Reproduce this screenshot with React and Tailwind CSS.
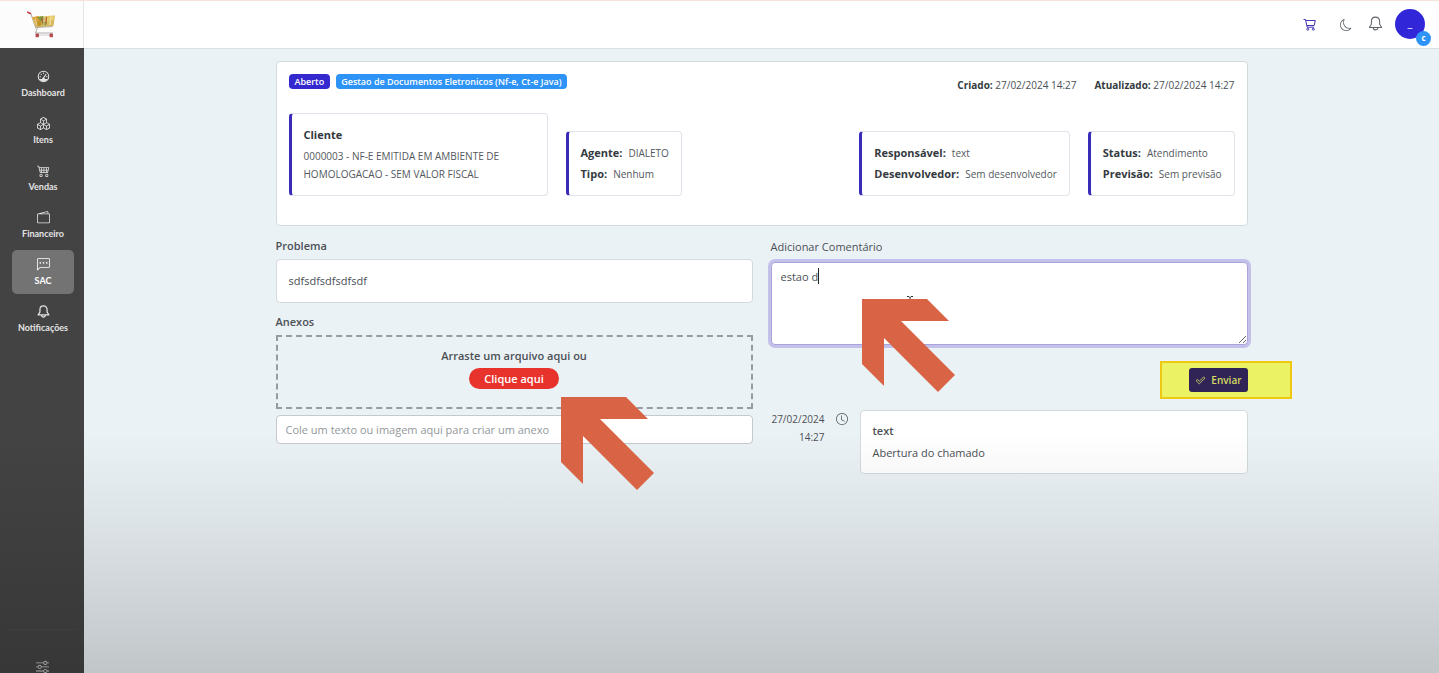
import React from "react";
import { BsBoxes, BsCart4, BsWallet2, BsSliders, BsMoon, BsClock, BsChatLeftDots } from "react-icons/bs";

function GaugeIcon({ className }) {
  return (
    <svg viewBox="0 0 14 14" className={className} fill="none" stroke="currentColor" aria-hidden="true">
      <circle cx="7" cy="7" r="5.700" strokeWidth="1.100" />
      <path d="M2.300 9.600H5.200A2 2 0 0 1 8.800 9.600H11.700A5.500 5.500 0 0 1 2.300 9.600Z" fill="currentColor" stroke="none" />
      <path d="M6.800 8.800L9.600 4.800" strokeWidth="1.200" strokeLinecap="round" />
      <g fill="currentColor" stroke="none">
        <circle cx="3.500" cy="7.200" r="0.700" />
        <circle cx="4.500" cy="4.700" r="0.700" />
        <circle cx="7" cy="3.500" r="0.700" />
        <circle cx="10.600" cy="7.200" r="0.700" />
      </g>
    </svg>
  );
}

function BellIcon({ className, weight = 1.5 }) {
  return (
    <svg viewBox="0 0 16 16" className={className} fill="none" stroke="currentColor" strokeWidth={weight} strokeLinejoin="round" aria-hidden="true">
      <path d="M8 1.200C5 1.200 3.600 3.200 3.600 5.800V8.800L1.400 12.200H14.600L12.400 8.800V5.800C12.400 3.200 11 1.200 8 1.200Z" />
      <path d="M5.600 12.400C5.600 15.600 10.400 15.600 10.400 12.400" />
    </svg>
  );
}

function HeaderCartIcon() {
  return (
    <svg viewBox="0 0 13 13" className="size-[13px]" fill="none" stroke="currentColor" strokeWidth="1" strokeLinejoin="round" aria-hidden="true">
      <path d="M0.500 1.500H2.500L4.200 9.200H11" />
      <path d="M2.700 2.500H12.300L11.200 7.500H3.900" />
      <circle cx="4.800" cy="11.200" r="1" />
      <circle cx="10.300" cy="11.200" r="1" />
    </svg>
  );
}

const navItems = [
  { label: "Dashboard", Icon: GaugeIcon },
  { label: "Itens", Icon: BsBoxes },
  { label: "Vendas", Icon: BsCart4 },
  { label: "Financeiro", Icon: BsWallet2 },
  { label: "SAC", Icon: BsChatLeftDots, active: true },
  { label: "Notificações", Icon: BellIcon },
];

function CartLogo() {
  return (
    <svg viewBox="0 0 30 28" className="h-[28px] w-[30px]" aria-label="Logo" role="img">
      <path d="M1 1.500 L4 3 L9 17.500" fill="none" stroke="#a9a4a0" strokeWidth="1" />
      <path d="M0.800 1.200 L3.500 2.500" stroke="#c8404a" strokeWidth="1.600" strokeLinecap="round" />
      <path d="M4.500 6 L28 4.500 L26.500 15 L9 16.500 Z" fill="#d8b85c" />
      <path d="M5.500 6.500 L11 5 L14 9 L10 12 Z" fill="#dd9c34" />
      <path d="M10 6 L16 5 L18 8 L14 11 Z" fill="#83993a" />
      <path d="M18 5.500 L27 5 L27 9 L20 11 Z" fill="#e8cc6a" />
      <circle cx="12" cy="12.500" r="2.500" fill="#c09428" />
      <circle cx="17.500" cy="12.500" r="2.200" fill="#8f9138" />
      <circle cx="22.500" cy="12" r="2.200" fill="#dcc46c" />
      <path d="M15 7 L15.500 12 M19.500 6 L19 12" stroke="#b5523a" strokeWidth="1" />
      <path d="M8 7 L10 14 M24 5.500 L23 14 M17 5 V15" stroke="#f3ebc8" strokeWidth="0.700" />
      <path d="M9.500 16.500 L25.500 15.500 M10.500 16.500 L8.500 22 H26" fill="none" stroke="#aaa5a5" strokeWidth="0.900" />
      <path d="M9 24 H26" stroke="#c9c4c4" strokeWidth="0.800" />
      <rect x="8.500" y="22.500" width="3.500" height="3.800" rx="1" fill="#b54c4c" />
      <rect x="22.500" y="22.500" width="3.500" height="3.800" rx="1" fill="#b54c4c" />
    </svg>
  );
}

function Arrow({ className }) {
  return (
    <svg viewBox="0 0 93 93" className={"pointer-events-none absolute z-30 h-[93px] w-[93px] " + className} aria-hidden="true">
      <path d="M0 0H65L87 22H39L93 76L76 93L22 39V87L0 65Z" fill="#d96445" />
    </svg>
  );
}

function CheckOutline() {
  return (
    <svg viewBox="0 0 12 10" className="h-[9px] w-[11px]" fill="none" stroke="currentColor" strokeWidth="0.900" strokeLinejoin="round" aria-hidden="true">
      <path d="M1 5.200 L2.500 3.800 L4.600 5.800 L9.600 1 L11 2.400 L4.600 8.700 Z" />
    </svg>
  );
}

function InfoCard({ rows }) {
  return (
    <dl className="flex flex-col gap-[3px] rounded-[4px] border border-l-[3px] border-[#dfe4ea] border-l-[#3a2bb8] p-3">
      {rows.map(([term, value]) => (
        <div key={term} className="flex items-baseline gap-[6px] leading-[18px] whitespace-nowrap">
          <dt className="text-[11px] font-bold text-[#343a40]">{term}</dt>
          <dd className="text-[10px] text-[#53585d]">{value}</dd>
        </div>
      ))}
    </dl>
  );
}

export default function App() {
  return (
    <div className="relative flex min-h-screen bg-[#ebf2f5] font-['Open_Sans','Noto_Sans',sans-serif] text-[#4b5055]">
      <aside className="flex w-[84px] shrink-0 flex-col bg-[#434343]">
        <a href="#" className="flex h-[48px] items-center justify-center border-t border-r border-t-[#f7e3da] border-r-[#e6e6e6] bg-[#fcfcfc]">
          <CartLogo />
        </a>
        <nav className="flex flex-col gap-[3px] pt-[14px] pr-[10px] pl-3">
          {navItems.map(({ label, Icon, active }) => (
            <a
              key={label}
              href="#"
              className={
                "flex h-[44px] flex-col items-center justify-center gap-[3px] rounded-[5px] pt-[2px] font-['Lato','Open_Sans',sans-serif] text-[9px] leading-[14px] font-bold whitespace-nowrap " +
                (active ? "bg-[#737373] text-white" : "text-[#e4e4e4]")
              }
            >
              <Icon className="size-[13px]" />
              {label}
            </a>
          ))}
        </nav>
        <div className="mx-2 mt-auto flex h-[44px] items-end justify-center border-t border-[#4a4a4a] text-[#d0d0d0]">
          <button type="button" aria-label="Configurações">
            <BsSliders className="size-[13px]" />
          </button>
        </div>
      </aside>

      <div className="flex min-w-0 flex-1 flex-col">
        <header className="flex h-[49px] items-center justify-end border-t border-b border-t-[#f7e3da] border-b-[#d9dfe2] bg-white pr-[14px] text-[#5f6368]">
          <button type="button" aria-label="Carrinho" className="mr-[24px] text-[#4335b5]">
            <HeaderCartIcon />
          </button>
          <button type="button" aria-label="Tema escuro" className="mr-[16px]">
            <BsMoon className="size-[12px]" />
          </button>
          <button type="button" aria-label="Notificações" className="mr-[12px] pb-[2px]">
            <BellIcon className="size-[15px]" weight={1.1} />
          </button>
          <button type="button" aria-label="Conta" className="relative mb-[2px] flex size-[30px] items-center justify-center rounded-full bg-[#3127d8] text-[11px] text-white">
            _
            <span className="absolute -right-[6px] -bottom-[7px] flex size-[15px] items-center justify-center rounded-full bg-[#2d93f7] text-[8px] font-bold">
              c
            </span>
          </button>
        </header>

        <main className="mx-auto w-full max-w-[972px] pt-3">
          <section className="rounded-[4px] border border-[#d3dadd] bg-white px-3 pt-3 pb-[29px]">
            <div className="flex items-start">
              <div className="flex gap-[6px] text-[9px] leading-[15px] font-semibold text-white">
                <span className="rounded-[4px] bg-[#3429cf] px-[6px]">Aberto</span>
                <span className="rounded-[4px] bg-[#2d93f7] px-[5px]">Gestao de Documentos Eletronicos (Nf-e, Ct-e Java)</span>
              </div>
              <div className="ml-auto flex gap-[18px] pt-[2px] text-[10px] leading-[19px]">
                <span><b className="text-[#343a40]">Criado:</b> 27/02/2024 14:27</span>
                <span><b className="text-[#343a40]">Atualizado:</b> 27/02/2024 14:27</span>
              </div>
            </div>
            <div className="mt-[18px] flex items-end gap-[18px]">
              <div className="w-[259px] rounded-[4px] border border-l-[3px] border-[#dfe4ea] border-l-[#3a2bb8] p-3">
                <h2 className="text-[11px] leading-[18px] font-bold text-[#343a40]">Cliente</h2>
                <p className="mt-[3px] text-[10px] leading-[18px] text-[#53585d]">
                  0000003 - NF-E EMITIDA EM AMBIENTE DE<br />HOMOLOGACAO - SEM VALOR FISCAL
                </p>
              </div>
              <InfoCard rows={[["Agente:", "DIALETO"], ["Tipo:", "Nenhum"]]} />
              <div className="ml-auto">
                <InfoCard rows={[["Responsável:", "text"], ["Desenvolvedor:", "Sem desenvolvedor"]]} />
              </div>
              <InfoCard rows={[["Status:", "Atendimento"], ["Previsão:", "Sem previsão"]]} />
            </div>
          </section>

          <div className="mt-[11px] grid grid-cols-2 gap-[18px]">
            <section>
              <h3 className="text-[11px] leading-[18px] font-semibold">Problema</h3>
              <p className="mt-1 rounded-[4px] border border-[#d3dadd] bg-white p-3 text-[11px] leading-[18px]">sdfsdfsdfsdfsdf</p>
              <h3 className="mt-[10px] text-[11px] leading-[18px] font-semibold">Anexos</h3>
              <div className="relative mt-1 flex h-[74px] flex-col items-center border-2 border-dashed border-[#979ca0] pt-[10px]">
                <span className="text-[11px] leading-[18px] font-semibold">Arraste um arquivo aqui ou</span>
                <button type="button" className="mt-[3px] h-[21px] rounded-full bg-[#e8322c] px-[15px] text-[11px] leading-[21px] font-semibold text-white">
                  Clique aqui
                </button>
                <Arrow className="top-[60px] left-[283px]" />
              </div>
              <input
                type="text"
                aria-label="Anexo"
                placeholder="Cole um texto ou imagem aqui para criar um anexo"
                className="mt-[6px] h-[29px] w-full rounded-[4px] border border-[#c3c9cc] bg-white px-[9px] text-[11px] placeholder:text-[#93989c]"
              />
            </section>

            <section>
              <label htmlFor="comentario" className="block pt-[1px] text-[11px] leading-[18px]">Adicionar Comentário</label>
              <div className="relative mt-[6px]">
                <textarea
                  id="comentario"
                  defaultValue="estao d"
                  className="block h-[83px] w-full rounded-[4px] border border-[#a9a5dc] bg-white px-[9px] py-[5px] text-[11px] leading-[18px] ring-[3px] ring-[#c3c1ea] outline-none"
                />
                <span className="absolute top-[6px] left-[47px] h-[16px] w-px bg-[#222]" />
                <svg viewBox="0 0 6 3" className="absolute top-[34px] left-[136px] h-[3px] w-[6px]" fill="none" stroke="#333" aria-hidden="true">
                  <path d="M0 0.500H2L3 1.500L4 0.500H6M3 1V3" />
                </svg>
                <Arrow className="top-[37px] left-[91px]" />
              </div>
              <div className="mt-[23px] flex justify-end">
                <div className="relative">
                  <span className="absolute -top-[7px] -right-[44px] -bottom-[7px] -left-[29px] border-2 border-[#efc813] bg-[#ebf364]" />
                  <button type="button" className="relative flex h-[24px] items-center gap-[5px] rounded-[3px] bg-[#302457] px-[6px] text-[10px] font-semibold text-[#d5d95f]">
                    <CheckOutline />
                    Enviar
                  </button>
                </div>
              </div>
              <div className="mt-[18px] flex items-start">
                <time className="w-[54px] text-right text-[10px] leading-[18px]">27/02/2024 14:27</time>
                <BsClock className="mt-[3px] ml-[11px] size-[12px] shrink-0" />
                <div className="ml-3 flex-1 rounded-[4px] border border-[#d3dadd] bg-white px-3 py-[11px]">
                  <h4 className="text-[11px] leading-[18px] font-semibold">text</h4>
                  <p className="mt-[4px] text-[11px] leading-[18px]">Abertura do chamado</p>
                </div>
              </div>
            </section>
          </div>
        </main>
      </div>
      <div className="pointer-events-none absolute inset-x-0 bottom-0 z-20 h-[240px] bg-[linear-gradient(to_bottom,transparent,rgba(0,0,0,0.06)_35%,rgba(0,0,0,0.18))]" />
    </div>
  );
}
